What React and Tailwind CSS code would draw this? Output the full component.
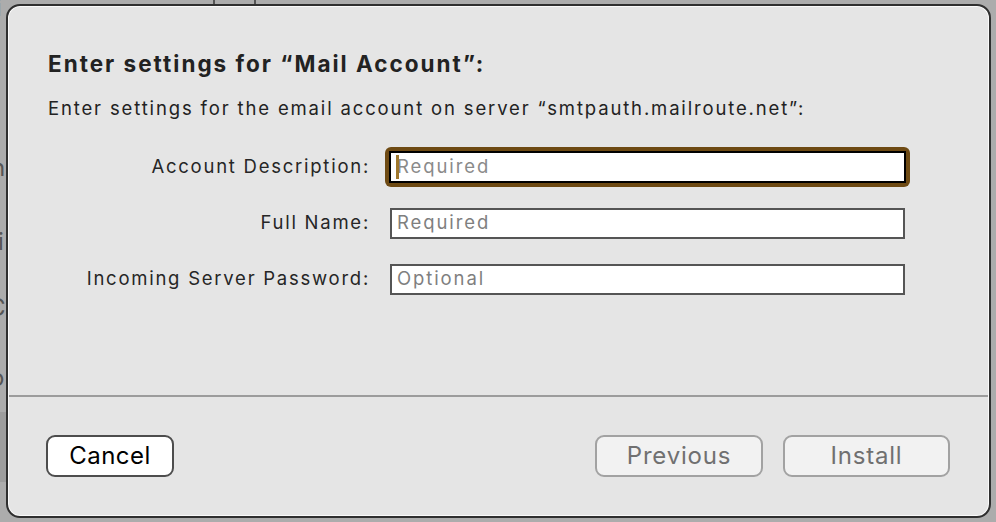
import React from 'react';

const font = { fontFamily: 'Inter, "Liberation Sans", sans-serif' };

function Field({ label, placeholder, focused = false }) {
    return (
        <div className="flex items-center h-[40px]">
            <label className="w-[382px] pr-[20px] text-right text-[18.5px] tracking-[1.75px] text-[#262626]">{label}</label>
            {focused ? (
                <div className="rounded-[6px] bg-[#6e4a13] p-[4px] -ml-[5px]">
                    <div className="relative w-[517px] h-[32px] bg-white border-2 border-black flex items-center">
                        <span className="absolute left-[5px] top-[2px] w-[3px] h-[24px] bg-[#a0782c]" />
                        <span className="pl-[6px] text-[18.5px] tracking-[1.9px] text-[#8a8a8a]">{placeholder}</span>
                    </div>
                </div>
            ) : (
                <div className="w-[515px] h-[31px] bg-white border-2 border-[#555] flex items-center">
                    <span className="pl-[5px] text-[18.5px] tracking-[1.9px] text-[#7f7f7f]">{placeholder}</span>
                </div>
            )}
        </div>
    );
}

export default function App() {
    return (
        <div className="relative w-[996px] h-[522px] overflow-hidden bg-[#acacac]" style={font}>
            {/* window behind the sheet */}
            <div className="absolute left-[213px] top-0 w-[2px] h-[6px] bg-[#555]" />
            <div className="absolute left-[254px] top-0 w-[2px] h-[6px] bg-[#555]" />
            <div className="absolute left-0 top-[412px] w-[8px] h-[70px] bg-[#9d9d9d]" />
            <span className="absolute -left-[4px] -top-[10px] text-[24px] text-[#777]">i</span>
            <span className="absolute -left-[9px] top-[150px] text-[24px] text-[#555]">n</span>
            <span className="absolute -left-[2px] top-[224px] text-[24px] text-[#555]">i</span>
            <span className="absolute -left-[12px] top-[290px] text-[24px] text-[#555]">C</span>
            <span className="absolute -left-[10px] top-[360px] text-[24px] text-[#555]">o</span>

            <div className="absolute left-[6px] top-[4px] w-[985px] h-[514px] rounded-[14px] border-2 border-[#2f2f2f] bg-[#e5e5e5] shadow-[inset_0_0_0_1px_#fafafa] flex flex-col">
                <div className="px-[40px] pt-[44px] h-[389px]">
                    <h1 className="text-[22.5px] font-bold tracking-[2px] text-[#222] leading-[28px]">
                        Enter settings for “Mail Account”:
                    </h1>
                    <p className="mt-[19px] text-[18.5px] tracking-[1.85px] text-[#222] leading-[22px]">
                        Enter settings for the email account on server “smtpauth.mailroute.net”:
                    </p>
                    <div className="mt-[28px] -ml-[40px] flex flex-col gap-[16px]">
                        <Field label="Account Description:" placeholder="Required" focused />
                        <Field label="Full Name:" placeholder="Required" />
                        <Field label="Incoming Server Password:" placeholder="Optional" />
                    </div>
                </div>
                <div className="mx-[1px] h-[2px] bg-[#9c9c9c]" />
                <div className="flex items-center pl-[38px] pr-[39px] pt-[38px]">
                    <button className="w-[128px] h-[42px] rounded-[9px] bg-white border-2 border-[#4d4d4d] text-[24px] tracking-[0.5px] text-black">
                        Cancel
                    </button>
                    <div className="ml-auto flex gap-[20px]">
                        <button className="w-[168px] h-[42px] rounded-[9px] bg-[#f2f2f2] border-2 border-[#a2a2a2] text-[24px] tracking-[0.8px] text-[#707070]">
                            Previous
                        </button>
                        <button className="w-[167px] h-[42px] rounded-[9px] bg-[#f2f2f2] border-2 border-[#a2a2a2] text-[24px] tracking-[0.8px] text-[#707070]">
                            Install
                        </button>
                    </div>
                </div>
            </div>
        </div>
    );
}
